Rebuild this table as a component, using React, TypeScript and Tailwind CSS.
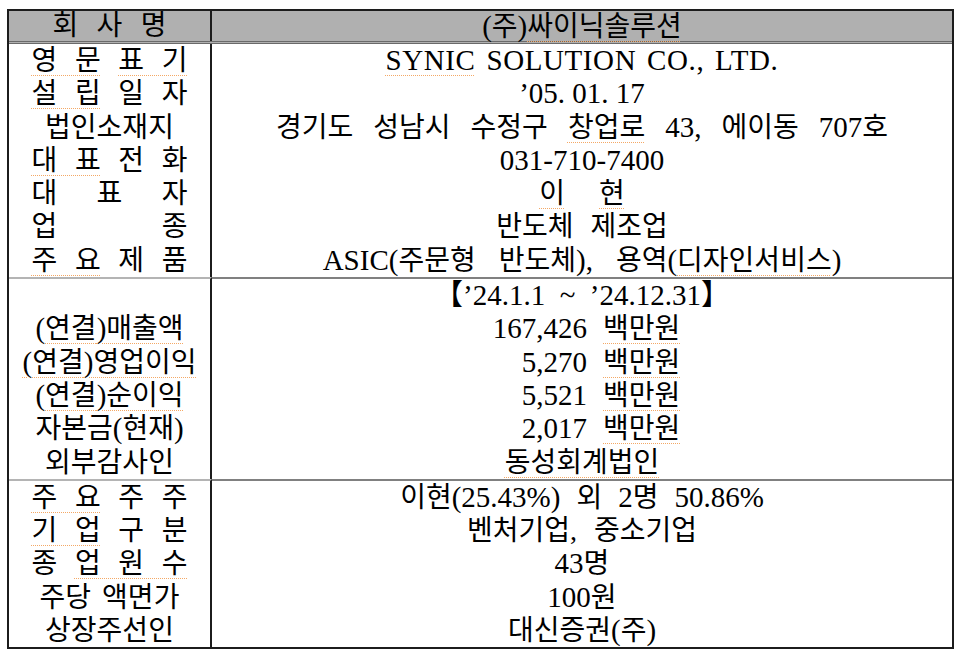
import type { ReactNode } from 'react';

// spell-check style dotted underline seen in the source document
function U({ children }: { children: ReactNode }) {
  return (
    <span className="underline decoration-dotted decoration-[#f4a865] decoration-1 underline-offset-[5px]">
      {children}
    </span>
  );
}

// latin / digits run a touch larger than hangul
function E({ children }: { children: ReactNode }) {
  return <span className="text-[29px]">{children}</span>;
}

function Spread({ children, w = 'w-[156px]' }: { children: ReactNode; w?: string }) {
  return <div className={`mx-auto ${w} text-justify [text-align-last:justify]`}>{children}</div>;
}

type Row = { label: ReactNode; value: ReactNode };

function Section({ rows, first }: { rows: Row[]; first?: boolean }) {
  return (
    <div className="flex">
      <div
        className={`w-[203px] shrink-0 border-r-2 border-[#1c1c1c] ${
          first ? '' : 'border-t-2 border-t-[#b4b4b4]'
        }`}
      >
        {rows.map((r, i) => (
          <div key={i} className="h-[33.3px] leading-[33.3px] text-center whitespace-nowrap">
            {r.label}
          </div>
        ))}
      </div>
      <div className={`flex-1 ${first ? '' : 'border-t-2 border-t-[#808080]'}`}>
        {rows.map((r, i) => (
          <div key={i} className="h-[33.3px] leading-[33.3px] text-center whitespace-pre">
            {r.value}
          </div>
        ))}
      </div>
    </div>
  );
}

function Money({ n }: { n: string }) {
  return (
    <div className="flex">
      <div className="w-[375px] text-right">
        <E>{n}</E>
      </div>
      <div className="ml-[16px]">
        <U>백만원</U>
      </div>
    </div>
  );
}

export default function App() {
  const basic: Row[] = [
    {
      label: (
        <Spread>
          <U>영 문</U> <U>표 기</U>
        </Spread>
      ),
      value: (
        <span className="text-[29px] tracking-[0.6px] [word-spacing:3px]">
          <U>SYNIC</U> SOLUTION CO., LTD.
        </span>
      ),
    },
    {
      label: (
        <Spread>
          <U>설 립</U> 일 자
        </Spread>
      ),
      value: <E>’05. 01. 17</E>,
    },
    {
      label: '법인소재지',
      value: (
        <span className="[word-spacing:13px]">
          경기도 성남시 수정구 <U>창업로</U> <E>43,</E> 에이동 <E>707</E>호
        </span>
      ),
    },
    {
      label: (
        <Spread>
          <U>대 표</U> 전 화
        </Spread>
      ),
      value: <E>031-710-7400</E>,
    },
    {
      label: <Spread>대 표 자</Spread>,
      value: (
        <U>
          이<span className="inline-block w-[34px]" />현
        </U>
      ),
    },
    { label: <Spread>업 종</Spread>, value: <span className="[word-spacing:10px]">반도체 제조업</span> },
    {
      label: (
        <Spread>
          <U>주 요</U> 제 품
        </Spread>
      ),
      value: (
        <span className="[word-spacing:16px]">
          <E>ASIC(</E>주문형 반도체<E>),</E> 용역<E>(</E>
          <U>디자인서비스</U>
          <E>)</E>
        </span>
      ),
    },
  ];

  const finance: Row[] = [
    { label: '', value: <E>【’24.1.1  ~  ’24.12.31】</E> },
    {
      label: (
        <>
          <E>(</E>
          <U>
            연결<E>)</E>매출액
          </U>
        </>
      ),
      value: <Money n="167,426" />,
    },
    {
      label: (
        <U>
          <E>(</E>연결<E>)</E>영업이익
        </U>
      ),
      value: <Money n="5,270" />,
    },
    {
      label: (
        <>
          <E>(</E>
          <U>
            연결<E>)</E>순이익
          </U>
        </>
      ),
      value: <Money n="5,521" />,
    },
    {
      label: (
        <>
          자본금<E>(</E>현재<E>)</E>
        </>
      ),
      value: <Money n="2,017" />,
    },
    { label: '외부감사인', value: <U>동성회계법인</U> },
  ];

  const share: Row[] = [
    {
      label: (
        <Spread>
          <U>주 요</U> 주 주
        </Spread>
      ),
      value: (
        <span className="[word-spacing:1px]">
          이현<E>(25.43%)</E>  외  <E>2</E>명  <E>50.86%</E>
        </span>
      ),
    },
    {
      label: (
        <Spread>
          <U>기 업</U> 구 분
        </Spread>
      ),
      value: <span className="[word-spacing:10px]">벤처기업, 중소기업</span>,
    },
    {
      label: (
        <Spread>
          종 <U>업 원 수</U>
        </Spread>
      ),
      value: (
        <>
          <E>43</E>명
        </>
      ),
    },
    {
      label: <span className="[word-spacing:4px]">주당 액면가</span>,
      value: (
        <>
          <E>100</E>원
        </>
      ),
    },
    {
      label: '상장주선인',
      value: (
        <>
          대신증권<E>(</E>주<E>)</E>
        </>
      ),
    },
  ];

  return (
    <div className="min-h-screen bg-white pt-[9px] pl-[7px] text-[28px] text-black font-['Liberation_Serif','Noto_Sans_CJK_KR',serif]">
      <div className="w-[947px] border-2 border-[#1c1c1c]">
        {/* header */}
        <div className="flex bg-[#b0b0b0] border-b-[3px] border-double border-b-[#6a6a6a]">
          <div className="w-[203px] shrink-0 border-r-2 border-[#1c1c1c] h-[30px] leading-[30px]">
            <Spread w="w-[114px]">회 사 명</Spread>
          </div>
          <div className="flex-1 h-[30px] leading-[30px] text-center">
            <E>(</E>주<E>)</E>
            <U>싸이닉솔루션</U>
          </div>
        </div>
        <Section rows={basic} first />
        <Section rows={finance} />
        <Section rows={share} />
      </div>
    </div>
  );
}
